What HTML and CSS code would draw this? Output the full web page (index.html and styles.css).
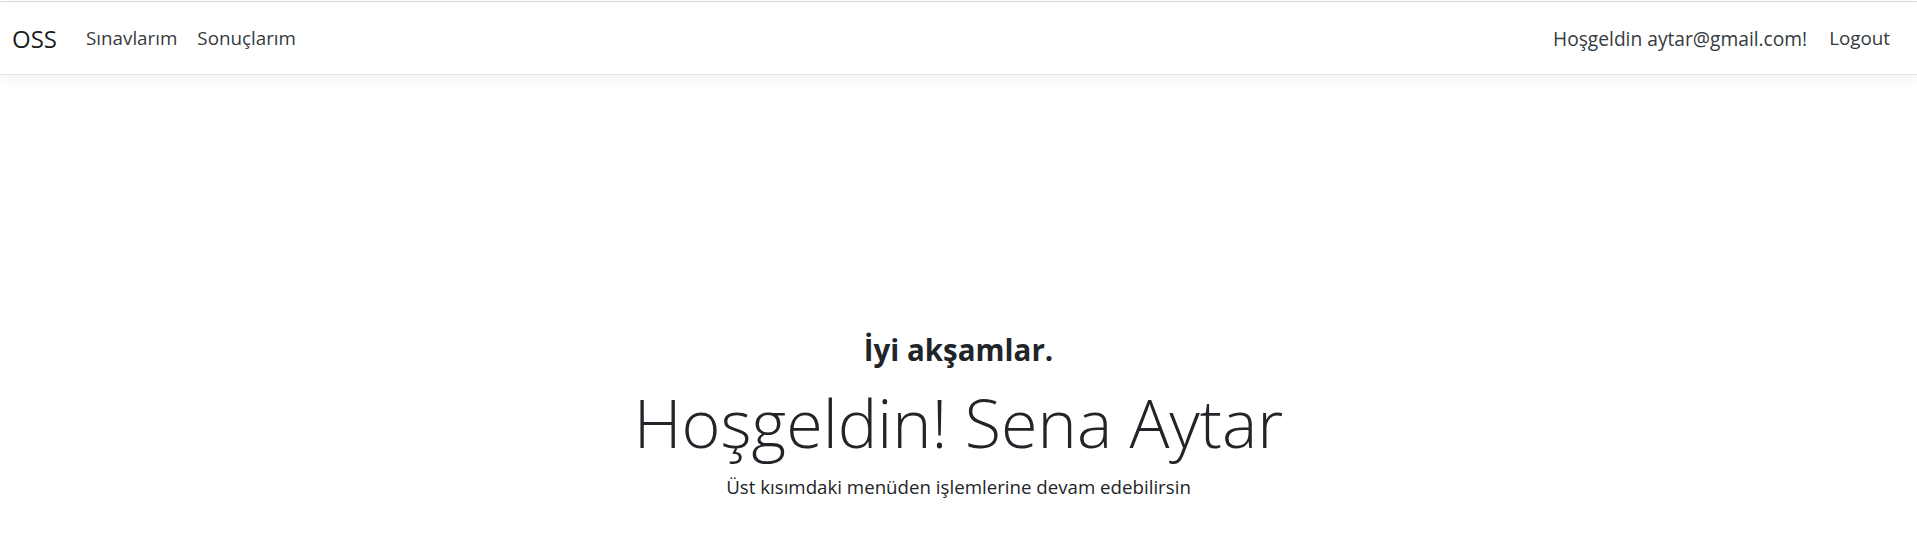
FILE: index.html
```html
<!DOCTYPE html>
<html lang="tr">
<head>
<meta charset="utf-8">
<title>OSS</title>
<link rel="stylesheet" href="styles.css">
</head>
<body>
<header class="site-header">
  <nav class="navbar">
    <div class="navbar-left">
      <a class="brand" href="#">OSS</a>
      <a class="nav-link" href="#">Sınavlarım</a>
      <a class="nav-link" href="#">Sonuçlarım</a>
    </div>
    <div class="navbar-right">
      <span class="nav-link nav-user">Hoşgeldin aytar@gmail.com!</span>
      <a class="nav-link" href="#">Logout</a>
    </div>
  </nav>
</header>
<main class="content">
  <div class="welcome">
    <h3 class="greeting">İyi akşamlar.</h3>
    <h1 class="display">Hoşgeldin! Sena Aytar</h1>
    <p class="lead-text">Üst kısımdaki menüden işlemlerine devam edebilirsin</p>
  </div>
</main>
</body>
</html>
```

FILE: styles.css
```css
html, body {
  margin: 0;
  padding: 0;
  background: #fff;
}
body {
  font-family: "Open Sans", "Noto Sans", sans-serif;
  color: #212529;
  padding-top: 1px;
}
a {
  text-decoration: none;
  color: inherit;
}
.site-header {
  border-top: 1px solid #dcdcdc;
}
.navbar {
  display: flex;
  justify-content: space-between;
  align-items: center;
  height: 72px;
  padding: 0 17px 0 12px;
  background: #fff;
  border-bottom: 1px solid #e3e3e3;
  box-shadow: 0 5px 15px rgba(0, 0, 0, 0.05);
}
.navbar-left, .navbar-right {
  display: flex;
  align-items: center;
}
.brand {
  font-size: 24px;
  color: rgba(0, 0, 0, 0.9);
  margin-right: 19px;
  padding-top: 1px;
}
.nav-link {
  font-size: 18.8px;
  color: #343a40;
  padding: 0 10px;
}
.nav-user {
  font-size: 19.2px;
  padding-right: 12px;
}
.content {
  padding-top: 257px;
}
.welcome {
  text-align: center;
}
.greeting {
  margin: 0;
  font-size: 29.5px;
  font-weight: 700;
  line-height: 36px;
}
.display {
  margin: 14px 0 0;
  font-size: 66.5px;
  font-weight: 300;
  line-height: 80px;
}
.lead-text {
  margin: 13px 0 0;
  font-size: 18.7px;
  font-weight: 400;
  line-height: 24px;
}
```
